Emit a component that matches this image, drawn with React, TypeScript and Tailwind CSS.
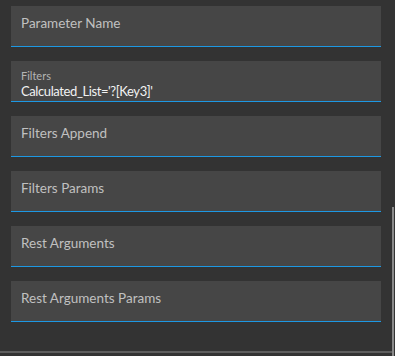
const fields: { label: string; value?: string }[] = [
  { label: 'Parameter Name' },
  { label: 'Filters', value: "Calculated_List='?[Key3]'" },
  { label: 'Filters Append' },
  { label: 'Filters Params' },
  { label: 'Rest Arguments' },
  { label: 'Rest Arguments Params' },
]

function Field({ label, value }: { label: string; value?: string }) {
  return (
    <div className="h-[41px] bg-[#464646] border-b border-[#1d98e3] px-[10px]">
      {value ? (
        <div className="pt-[8px] flex flex-col">
          <span className="text-[11px] leading-[13px] text-[#b4b4b4]">{label}</span>
          <span className="text-[13px] leading-[17px] text-[#f2f2f2] tracking-[-0.4px] mt-[1px]">
            {value}
          </span>
        </div>
      ) : (
        <div className="pt-[8px] text-[13.5px] leading-[18px] text-[#c0c0c0]">{label}</div>
      )}
    </div>
  )
}

export default function App() {
  return (
    <div
      className="relative w-[395px] h-[356px] bg-[#333333] overflow-hidden"
      style={{ fontFamily: 'Lato, "Noto Sans", sans-serif' }}
    >
      <div className="w-[392px] pt-[6px] px-[11px] flex flex-col gap-[14px]">
        {fields.map((f) => (
          <Field key={f.label} label={f.label} value={f.value} />
        ))}
      </div>
      <div className="w-[392px] h-[2px] mt-[29px] bg-[#5e5e5e]" />
      <div className="absolute right-[1px] top-[207px] w-[2px] h-[149px] bg-[#8a8a8a]" />
    </div>
  )
}
